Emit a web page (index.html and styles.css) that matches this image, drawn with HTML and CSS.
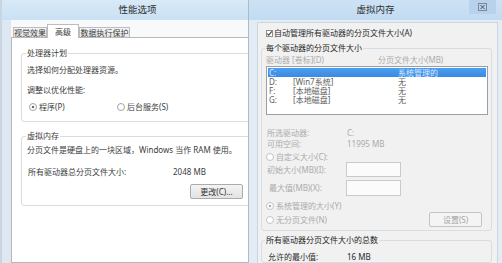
FILE: index.html
```html
<!DOCTYPE html>
<html lang="zh-CN">
<head>
    <meta charset="UTF-8">
    <meta name="viewport" content="width=device-width, initial-scale=1.0">
    <title>性能选项 - 虚拟内存</title>
    <link rel="stylesheet" href="styles.css">
</head>
<body>
    <div class="screen">
        <!-- 性能选项 窗口 -->
        <section class="win win-perf">
            <div class="titlebar">性能选项</div>
            <div class="frame">
                <div class="client">
                    <div class="tabs">
                        <div class="tab tab-visual">视觉效果</div>
                        <div class="tab tab-active">高级</div>
                        <div class="tab tab-dep">数据执行保护</div>
                    </div>
                    <div class="tab-panel">
                        <fieldset class="group group-cpu">
                            <legend>处理器计划</legend>
                            <p class="line">选择如何分配处理器资源。</p>
                            <p class="line line-adjust">调整以优化性能:</p>
                            <div class="radio-row">
                                <span class="radio radio-on radio-program">程序(P)</span>
                                <span class="radio">后台服务(S)</span>
                            </div>
                        </fieldset>

                        <fieldset class="group group-vm">
                            <legend>虚拟内存</legend>
                            <p class="line">分页文件是硬盘上的一块区域，Windows 当作 RAM 使用。</p>
                            <div class="kv-row">
                                <span class="kv-label">所有驱动器总分页文件大小:</span>
                                <span>2048 MB</span>
                            </div>
                            <button type="button" class="btn btn-change">更改(C)...</button>
                        </fieldset>
                    </div>
                </div>
            </div>
        </section>

        <!-- 虚拟内存 窗口 -->
        <section class="win win-vm">
            <div class="titlebar">
                虚拟内存
                <span class="close-btn">
                    <svg width="9" height="8" viewBox="0 0 9 8">
                        <rect x="0.5" y="0.5" width="8" height="7" fill="none" stroke="#7b8a98"/>
                        <path d="M2.5 2 L6.5 6 M6.5 2 L2.5 6" stroke="#4a5560" stroke-width="1"/>
                    </svg>
                </span>
            </div>
            <div class="frame">
                <div class="client">
                    <div class="check-row">
                        <span class="checkbox">
                            <svg width="7" height="7" viewBox="0 0 7 7">
                                <path d="M1.3 3.6 L2.8 5.2 L5.8 1.4" fill="none" stroke="#444" stroke-width="1.1"/>
                            </svg>
                        </span>
                        自动管理所有驱动器的分页文件大小(A)
                    </div>

                    <fieldset class="group group-drives">
                        <legend>每个驱动器的分页文件大小</legend>
                        <div class="list-head">
                            <span class="col-name">驱动器 [卷标](D)</span>
                            <span>分页文件大小(MB)</span>
                        </div>
                        <div class="listbox">
                            <div class="list-row selected">
                                <span class="col-drive">C:</span>
                                <span class="col-label"></span>
                                <span>系统管理的</span>
                            </div>
                            <div class="list-row">
                                <span class="col-drive">D:</span>
                                <span class="col-label">[Win7系统]</span>
                                <span>无</span>
                            </div>
                            <div class="list-row">
                                <span class="col-drive">F:</span>
                                <span class="col-label">[本地磁盘]</span>
                                <span>无</span>
                            </div>
                            <div class="list-row">
                                <span class="col-drive">G:</span>
                                <span class="col-label">[本地磁盘]</span>
                                <span>无</span>
                            </div>
                        </div>

                        <div class="drive-info">
                            <div class="info-row"><span class="info-label">所选驱动器:</span><span>C:</span></div>
                            <div class="info-row"><span class="info-label">可用空间:</span><span>11995 MB</span></div>
                        </div>

                        <div class="radio radio-custom">自定义大小(C):</div>
                        <div class="field-row">
                            <span class="field-label">初始大小(MB)(I):</span>
                            <span class="textbox"></span>
                        </div>
                        <div class="field-row field-max">
                            <span class="field-label">最大值(MB)(X):</span>
                            <span class="textbox"></span>
                        </div>
                        <div class="radio radio-on radio-system">系统管理的大小(Y)</div>
                        <div class="none-row">
                            <span class="radio">无分页文件(N)</span>
                            <button type="button" class="btn btn-set">设置(S)</button>
                        </div>
                    </fieldset>

                    <fieldset class="group group-total">
                        <legend>所有驱动器分页文件大小的总数</legend>
                        <div class="info-row total-row"><span class="info-label">允许的最小值:</span><span>16 MB</span></div>
                    </fieldset>
                </div>
            </div>
        </section>
    </div>
</body>
</html>
```

FILE: styles.css
```css
* {
    margin: 0;
    padding: 0;
    box-sizing: border-box;
}

body {
    font-family: "Noto Sans", "Noto Sans CJK SC", sans-serif;
    font-size: 8px;
    line-height: 10px;
    color: #3c3c3c;
    background-color: #ffffff;
}

.screen {
    position: relative;
    width: 502px;
    height: 263px;
    overflow: hidden;
}

/* 通用窗口 */
.win {
    display: flex;
    flex-direction: column;
    height: 263px;
}

.titlebar {
    position: relative;
    height: 20px;
    line-height: 20px;
    text-align: center;
    font-size: 9.5px;
    color: #2e2e2e;
    background: linear-gradient(to bottom, #d8e9f7, #cae1f4);
}

.frame {
    flex: 1;
    display: flex;
    flex-direction: column;
}

.client {
    flex: 1;
    display: flex;
    flex-direction: column;
}

/* 性能选项 */
.win-perf {
    width: 273px;
    background-color: #dde8f2;
    border-left: 2px solid #c9d6e2;
}

.win-perf .frame {
    padding-left: 9px;
}

.win-perf .client {
    background-color: #f7f9fb;
}

.tabs {
    display: flex;
    align-items: flex-end;
    height: 17px;
    padding-left: 2px;
}

.tab {
    height: 10px;
    line-height: 9px;
    text-align: center;
    border: 1px solid #bcbcbc;
    border-bottom: none;
    background: linear-gradient(to bottom, #f4f4f4, #e8e8e8);
}

.tab-visual {
    width: 34px;
}

.tab-active {
    position: relative;
    z-index: 1;
    width: 32px;
    height: 14px;
    line-height: 13px;
    margin-bottom: -1px;
    background: #ffffff;
}

.tab-dep {
    width: 51px;
}

.tab-panel {
    flex: 1;
    border: 1px solid #b7b7b7;
    background-color: #ffffff;
    padding-left: 9px;
}

.group {
    border: 1px solid #dcdcdc;
    border-radius: 3px;
    padding: 0 5px;
    min-width: 0;
}

.group legend {
    padding: 0 1px;
    margin-left: -1px;
    line-height: 10px;
}

.group-cpu {
    margin-top: 10px;
    padding-top: 7px;
    padding-bottom: 9px;
}

.line-adjust {
    margin-top: 10px;
}

.radio-row {
    display: flex;
    margin-top: 7px;
    padding-left: 2px;
}

.radio {
    display: flex;
    align-items: center;
    gap: 2px;
    height: 10px;
}

.radio::before {
    content: "";
    width: 6px;
    height: 6px;
    border: 1px solid #a3a3a3;
    border-radius: 50%;
    background: #ffffff;
}

.radio-on::before {
    background: radial-gradient(circle, #5b6b7a 0, #5b6b7a 1.3px, #ffffff 1.6px);
}

.radio-program {
    width: 88px;
}

.group-vm {
    margin-top: 9px;
    padding-top: 4px;
    padding-bottom: 6px;
}

.kv-row {
    display: flex;
    margin-top: 12px;
    padding-left: 1px;
}

.kv-label {
    width: 145px;
}

.btn {
    display: block;
    height: 15px;
    width: 53px;
    font-family: inherit;
    font-size: 8px;
    color: #333333;
    border: 1px solid #acacac;
    border-radius: 2px;
    background: linear-gradient(to bottom, #f3f3f3, #e3e3e3);
}

.btn-change {
    margin-top: 7px;
    margin-left: 163px;
}

/* 虚拟内存 */
.win-vm {
    position: absolute;
    left: 248px;
    top: 0;
    width: 254px;
    background-color: #e3ecf5;
    border-left: 1px solid #a9bccd;
}

.win-vm .titlebar {
    background: linear-gradient(to bottom, #cde2f4, #c2dbf1);
}

.close-btn {
    position: absolute;
    right: 6px;
    top: 0;
    width: 27px;
    height: 14px;
    display: flex;
    align-items: center;
    justify-content: center;
    background-color: #b7d2ea;
}

.win-vm .frame {
    padding: 2px 4px 0 8px;
}

.win-vm .client {
    border: 1px solid #cbd5de;
    border-bottom: none;
    background-color: #f1f1f1;
}

.check-row {
    display: flex;
    align-items: center;
    height: 10px;
    margin-top: 5px;
    padding-left: 8px;
    color: #2a2a2a;
}

.checkbox {
    display: flex;
    width: 7px;
    height: 7px;
    margin-right: 1px;
    border: 1px solid #8f8f8f;
    background: #ffffff;
}

.checkbox svg {
    margin: -1px;
}

.group-drives {
    margin: 5px 5px 0 3px;
    padding: 2px 3px 3px 4px;
    border-color: #d6dde3;
}

.group-drives legend,
.group-total legend {
    color: #222222;
}

.list-head {
    display: flex;
    color: #ababab;
}

.col-name {
    width: 112px;
}

.listbox {
    height: 49px;
    margin-top: 1px;
    padding: 1px;
    border: 1px solid #9aa0a8;
    background-color: #ffffff;
}

.list-row {
    display: flex;
    height: 9px;
    line-height: 9px;
    color: #5e5e5e;
}

.list-row.selected {
    color: #d9ecff;
    background: linear-gradient(to bottom, #4d9df0, #3a8ae4);
}

.col-drive {
    width: 25px;
    padding-left: 1px;
}

.col-label {
    width: 105px;
}

.drive-info {
    margin-top: 12px;
    color: #ababab;
}

.info-row {
    display: flex;
    line-height: 11px;
}

.info-label {
    width: 81px;
    padding-left: 1px;
}

.radio-custom,
.radio-system,
.none-row {
    color: #ababab;
}

.radio-custom {
    margin-top: 3px;
}

.radio-custom::before,
.radio-system::before,
.none-row .radio::before {
    border-color: #c3c3c3;
}

.radio-system::before {
    background: radial-gradient(circle, #a8a8a8 0, #a8a8a8 1.3px, #ffffff 1.6px);
}

.field-row {
    display: flex;
    align-items: center;
    height: 15px;
    color: #ababab;
}

.field-max {
    height: 16px;
    margin-top: 3px;
}

.field-label {
    width: 80px;
    padding-left: 1px;
}

.field-max .field-label {
    padding-left: 3px;
}

.textbox {
    width: 55px;
    height: 100%;
    border: 1px solid #cacaca;
    background-color: #fbfbfb;
}

.radio-system {
    margin-top: 5px;
}

.none-row {
    display: flex;
    align-items: center;
    justify-content: space-between;
    height: 15px;
    margin-top: 1px;
}

.btn-set {
    margin-right: 6px;
    color: #a5a5a5;
    border-color: #c4c4c4;
    background: #f4f4f4;
}

.group-total {
    margin: 4px 5px 0 3px;
    padding: 7px 3px 0 4px;
    border-color: #d6dde3;
}

.total-row {
    line-height: 10px;
    color: #2a2a2a;
}

.total-row .info-label {
    padding-left: 2px;
}
```
